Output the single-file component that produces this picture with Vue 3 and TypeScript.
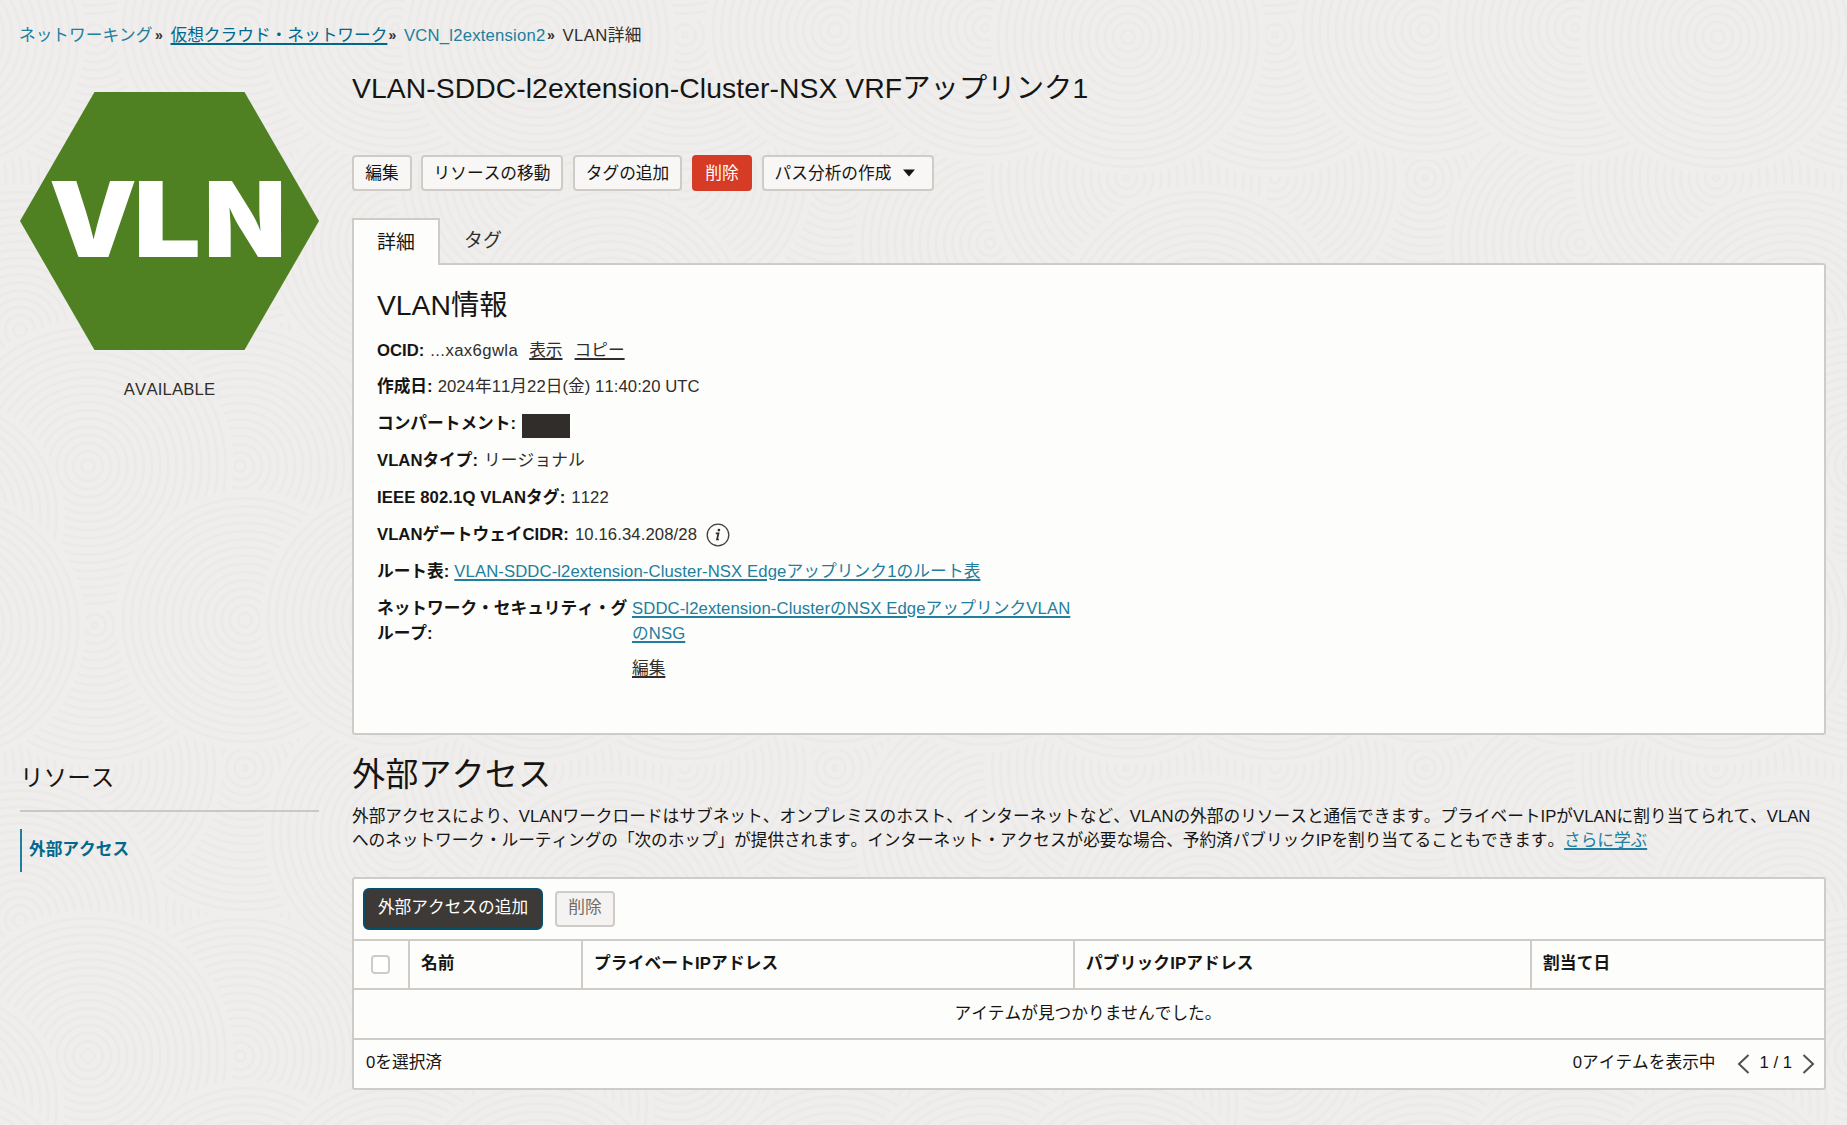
<script setup lang="ts">
interface Disc { x: number; y: number; r: number }

const TILE = 590
const RING_STEP = 8.2

const discs: Disc[] = [
  { x: 388, y: 323, r: 150 },
  { x: 240, y: 323, r: 140 },
  { x: 536, y: 323, r: 145 },
  { x: 388, y: 468, r: 142 },
  { x: 245, y: 178, r: 150 },
  { x: 95, y: 178, r: 128 },
  { x: 400, y: 243, r: 136 },
  { x: 536, y: 178, r: 142 },
  { x: 240, y: 466, r: 145 },
  { x: 20, y: 330, r: 146 },
  { x: 95, y: 35, r: 142 },
  { x: 88, y: 466, r: 146 },
  { x: 245, y: 30, r: 130 },
  { x: 535, y: 515, r: 120 },
  { x: 395, y: 28, r: 135 },
  { x: 538, y: 37, r: 138 },
]

const tiledDiscs: Disc[] = discs.flatMap((d) =>
  [-TILE, 0, TILE].flatMap((dx) => [-TILE, 0, TILE].map((dy) => ({ x: d.x + dx, y: d.y + dy, r: d.r }))),
).filter((d) => d.x + d.r > 0 && d.x - d.r < TILE && d.y + d.r > 0 && d.y - d.r < TILE)

const rings = (r: number): number[] =>
  Array.from({ length: Math.floor(r / RING_STEP) }, (_, i) => r - (i + 1) * RING_STEP)

const actions = [
  { label: '編集', cls: 'w-edit' },
  { label: 'リソースの移動', cls: 'w-move' },
  { label: 'タグの追加', cls: 'w-tag' },
  { label: '削除', cls: 'w-del danger' },
]

const columns = ['名前', 'プライベートIPアドレス', 'パブリックIPアドレス', '割当て日']
</script>

<template>
  <div class="page">
    <svg class="texture" width="100%" height="100%" aria-hidden="true">
      <defs>
        <pattern id="swirl" :width="TILE" :height="TILE" patternUnits="userSpaceOnUse">
          <rect :width="TILE" :height="TILE" fill="#efeeec" />
          <g v-for="(d, i) in tiledDiscs" :key="i">
            <circle :cx="d.x" :cy="d.y" :r="d.r" fill="#efeeec" />
            <circle
              v-for="(r, j) in rings(d.r)"
              :key="j"
              :cx="d.x"
              :cy="d.y"
              :r="r"
              fill="none"
              stroke="#ebeae8"
              stroke-width="2.6"
            />
          </g>
        </pattern>
      </defs>
      <rect width="100%" height="100%" fill="url(#swirl)" />
    </svg>

    <nav class="crumbs">
      <a class="c1">ネットワーキング</a><span class="sep">»</span>
      <a class="c2 under">仮想クラウド・ネットワーク</a><span class="sep">»</span>
      <a class="c3">VCN_l2extension2</a><span class="sep">»</span>
      <span class="c4">VLAN詳細</span>
    </nav>

    <div class="columns">
      <aside class="side">
        <svg class="hex" width="299" height="258" viewBox="0 0 299 258">
          <polygon points="74.5,0 224.5,0 299,129 224.5,258 74.5,258 0,129" fill="#4f8022" />
          <g class="hex-text">
            <text transform="translate(29 164.5) scale(1.06 1)">V</text>
            <text transform="translate(113.5 164.5) scale(1.14 1)">L</text>
            <text transform="translate(184 164.5) scale(1.02 1)">N</text>
          </g>
        </svg>
        <div class="status">AVAILABLE</div>
        <h3 class="side-title">リソース</h3>
        <a class="side-link">外部アクセス</a>
      </aside>

      <main class="main">
        <h1 class="title">VLAN-SDDC-l2extension-Cluster-NSX VRFアップリンク1</h1>

        <div class="actions">
          <button v-for="a in actions" :key="a.label" class="btn" :class="a.cls">{{ a.label }}</button>
          <button class="btn w-path">
            パス分析の作成
            <svg width="12" height="8" viewBox="0 0 12 8"><path d="M0 .5h12L6 7.5z" fill="#161513" /></svg>
          </button>
        </div>

        <div class="tabs">
          <div class="tab active">詳細</div>
          <div class="tab">タグ</div>
        </div>

        <section class="panel">
          <h2 class="panel-title">VLAN情報</h2>
          <div class="row ocid"><b>OCID:</b> <span class="val wide">...xax6gwla</span><a class="dark show">表示</a><a class="dark">コピー</a></div>
          <div class="row"><b>作成日:</b> <span class="val date">2024年11月22日(金) 11:40:20 UTC</span></div>
          <div class="row"><b>コンパートメント:</b> <span class="redacted"></span></div>
          <div class="row"><b>VLANタイプ:</b> <span class="val">リージョナル</span></div>
          <div class="row"><b class="ieee">IEEE 802.1Q VLANタグ:</b> <span class="val">1122</span></div>
          <div class="row">
            <b>VLANゲートウェイCIDR:</b> <span class="val">10.16.34.208/28</span>
            <svg class="info" width="24" height="24" viewBox="0 0 24 24">
              <circle cx="12" cy="12" r="10.8" fill="none" stroke="#45413d" stroke-width="1.3" />
              <circle cx="12.9" cy="7.1" r="1.35" fill="#312d2a" />
              <path d="M9.8 10.3h2.7l-1.5 6.2h1.9" fill="none" stroke="#312d2a" stroke-width="1.7" />
            </svg>
          </div>
          <div class="row"><b class="tight">ルート表:</b> <a class="link spaced">VLAN-SDDC-l2extension-Cluster-NSX Edgeアップリンク1のルート表</a></div>
          <div class="row nsg">
            <b>ネットワーク・セキュリティ・グ<br>ループ:</b>
            <div class="nsg-val">
              <a class="link spaced">SDDC-l2extension-ClusterのNSX EdgeアップリンクVLAN<br>のNSG</a>
              <a class="dark edit">編集</a>
            </div>
          </div>
        </section>

        <h2 class="section-title">外部アクセス</h2>
        <p class="desc">
          <span class="line">外部アクセスにより、VLANワークロードはサブネット、オンプレミスのホスト、インターネットなど、VLANの外部のリソースと通信できます。プライベートIPがVLANに割り当てられて、VLAN</span>
          <span class="line l2">へのネットワーク・ルーティングの「次のホップ」が提供されます。インターネット・アクセスが必要な場合、予約済パブリックIPを割り当てることもできます。<a class="link">さらに学ぶ</a></span>
        </p>

        <section class="table">
          <div class="toolbar">
            <button class="btn primary">外部アクセスの追加</button>
            <button class="btn disabled">削除</button>
          </div>
          <div class="thead">
            <div class="th check"><span class="box"></span></div>
            <div v-for="c in columns" :key="c" class="th"><span>{{ c }}</span></div>
          </div>
          <div class="empty">アイテムが見つかりませんでした。</div>
          <div class="tfoot">
            <span class="selected">0を選択済</span>
            <span class="showing">0アイテムを表示中</span>
            <svg width="13" height="20" viewBox="0 0 13 20"><path d="M11.5 1 2 10l9.5 9" fill="none" stroke="#55504c" stroke-width="2" /></svg>
            <span class="pages">1 / 1</span>
            <svg width="13" height="20" viewBox="0 0 13 20"><path d="M1.5 1 11 10l-9.5 9" fill="none" stroke="#55504c" stroke-width="2" /></svg>
          </div>
        </section>
      </main>
    </div>
  </div>
</template>

<style>
body {
  margin: 0;
  background: #efeeec;
}
</style>

<style scoped>
.page {
  position: relative;
  box-sizing: border-box;
  width: 1847px;
  height: 1125px;
  overflow: hidden;
  padding: 23px 21px 0 20px;
  font-family: 'Liberation Sans', 'Noto Sans CJK JP', sans-serif;
  font-size: 16.7px;
  font-kerning: none;
  line-height: 25px;
  color: #312d2a;
  white-space: nowrap;
}
.texture {
  position: absolute;
  inset: 0;
}
.crumbs,
.columns {
  position: relative;
}
.crumbs {
  display: flex;
  height: 24px;
  margin-left: -1px;
}
.crumbs a {
  color: #227e9e;
}
.crumbs a.under {
  color: #00688c;
  text-decoration: underline;
  text-decoration-thickness: 1.5px;
  text-underline-offset: 2px;
}
.c1 { width: 136px; }
.c2 { width: 218px; }
.c3 { width: 143px; letter-spacing: 0.2px; }
.c4 { letter-spacing: 0.4px; }
.sep {
  width: 15.5px;
  font-size: 14px;
  font-weight: bold;
}
.columns {
  display: flex;
  gap: 33px;
}
.side {
  width: 299px;
  padding-top: 45px;
}
.hex {
  display: block;
}
.hex-text {
  font-family: Inter, sans-serif;
  font-weight: 900;
  font-size: 104.5px;
  fill: #fff;
}
.status {
  margin-top: 27px;
  text-align: center;
  letter-spacing: 0.15px;
}
h1,
h2,
h3,
p {
  margin: 0;
  font-weight: 400;
  color: #161513;
}
.side-title {
  box-sizing: border-box;
  height: 51px;
  margin-top: 359px;
  padding-top: 1px;
  line-height: 32px;
  font-size: 23.6px;
  border-bottom: 2px solid #cbc7c2;
}
.side-link {
  display: block;
  margin-top: 17px;
  padding-left: 7px;
  height: 43px;
  line-height: 41px;
  border-left: 2px solid #227e9e;
  color: #00688c;
  font-weight: 700;
}
.main {
  width: 1474px;
}
.title {
  margin-top: 23px;
  font-size: 28.3px;
  letter-spacing: 0.08px;
  line-height: 36px;
}
.actions {
  display: flex;
  margin-top: 49px;
}
.btn {
  box-sizing: border-box;
  display: flex;
  align-items: center;
  justify-content: center;
  height: 36px;
  padding: 0;
  border: 2px solid #cfcbc7;
  border-radius: 4px;
  background: #f8f7f5;
  color: #161513;
  font: inherit;
}
.w-edit { width: 60px; margin-right: 9px; }
.w-move { width: 142px; margin-right: 10px; }
.w-tag { width: 109px; margin-right: 10px; }
.w-del { width: 60px; margin-right: 10px; }
.w-path { width: 172px; gap: 12px; padding-right: 6px; }
.btn.danger {
  background: #d63b25;
  border-color: #d63b25;
  color: #fff;
}
.tabs {
  display: flex;
  margin-top: 27px;
  height: 45px;
}
.tab {
  padding: 0 24px;
  font-size: 18.9px;
  line-height: 45px;
}
.tab.active {
  position: relative;
  box-sizing: border-box;
  width: 88px;
  height: 47px;
  padding: 0 23px;
  line-height: 46px;
  border: 2px solid #cfcbc7;
  border-bottom: 0;
  background: #fdfdfb;
  color: #161513;
}
.panel {
  box-sizing: border-box;
  height: 472px;
  padding: 22px 23px 0;
  border: 2px solid #cfcbc7;
  border-radius: 0 3px 3px 3px;
  background: #fdfdfb;
}
.panel-title {
  font-size: 28.3px;
  line-height: 36px;
  margin-bottom: 15px;
}
.row {
  display: flex;
  height: 25px;
  margin-bottom: 12px;
}
.row.ocid {
  margin-bottom: 11px;
}
.row b {
  color: #161513;
  margin-right: 6px;
}
.row b.tight {
  margin-right: 5px;
}
.row b.ieee {
  letter-spacing: 0.1px;
}
.val {
  letter-spacing: 0.1px;
}
.val.wide {
  letter-spacing: 0.4px;
}
.val.date {
  margin-left: -1px;
  letter-spacing: 0.05px;
}
.show {
  margin: 0 12px 0 11px;
}
.dark {
  text-decoration: underline;
  text-decoration-thickness: 1.5px;
  text-underline-offset: 2px;
}
.redacted {
  width: 48px;
  height: 24px;
  margin-top: 3px;
  background: #312d2a;
}
.info {
  margin: 1px 0 0 9px;
}
.link {
  color: #227e9e;
  text-decoration: underline;
  text-decoration-thickness: 1.5px;
  text-underline-offset: 2px;
}
.link.spaced {
  letter-spacing: 0.1px;
}
.nsg {
  height: auto;
}
.nsg b {
  width: 249px;
}
.nsg-val {
  display: flex;
  flex-direction: column;
  align-items: flex-start;
}
.edit {
  margin-top: 10px;
}
.section-title {
  margin-top: 18px;
  font-size: 33.2px;
  line-height: 44px;
}
.desc {
  margin-top: 7px;
}
.line {
  display: block;
  height: 24px;
}
.l2 {
  letter-spacing: -0.07px;
}
.table {
  box-sizing: border-box;
  height: 213px;
  margin-top: 25px;
  border: 2px solid #cfcbc7;
  border-radius: 3px;
  background: #fdfdfb;
}
.toolbar {
  box-sizing: border-box;
  display: flex;
  align-items: center;
  height: 60px;
  padding: 0 9px;
  gap: 12px;
}
.btn.primary {
  width: 180px;
  height: 42px;
  padding-bottom: 3px;
  border-color: #04506a;
  border-radius: 6px;
  background: #3c3936;
  color: #fff;
}
.btn.disabled {
  width: 60px;
  padding-bottom: 3px;
  background: #f4f3f1;
  color: #6f6b68;
}
.thead {
  display: flex;
  box-sizing: border-box;
  height: 51px;
  border-top: 2px solid #cfcbc7;
  border-bottom: 2px solid #cfcbc7;
}
.th {
  box-sizing: border-box;
  border-left: 2px solid #cfcbc7;
  padding-left: 11px;
  line-height: 45px;
  letter-spacing: 0.15px;
  font-weight: 700;
  color: #161513;
}
.th:nth-child(1) { width: 54px; border: 0; padding: 14px 0 0 17px; }
.th:nth-child(2) { width: 173px; }
.th:nth-child(3) { width: 492px; }
.th:nth-child(4) { width: 457px; }
.box {
  display: block;
  box-sizing: border-box;
  width: 19px;
  height: 19px;
  border: 2px solid #cfcbc7;
  border-radius: 4px;
  background: #fff;
}
.empty {
  box-sizing: border-box;
  height: 50px;
  padding-right: 2px;
  line-height: 48px;
  text-align: center;
  border-bottom: 2px solid #cfcbc7;
  color: #161513;
}
.tfoot {
  display: flex;
  align-items: center;
  height: 48px;
  padding: 0 9px 0 12px;
  color: #161513;
}
.tfoot span {
  margin-top: -3px;
}
.selected {
  flex: 1;
}
.showing {
  margin-right: 21px;
}
.pages {
  margin: 0 10px;
}
</style>
